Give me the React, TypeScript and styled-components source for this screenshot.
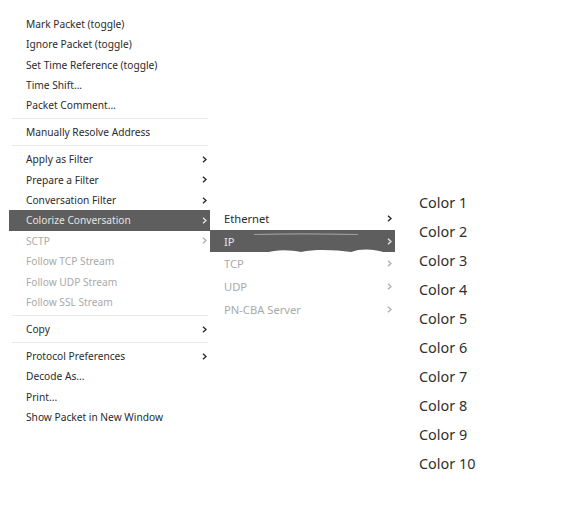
import React from "react";
import styled, { createGlobalStyle } from "styled-components";

const GlobalStyle = createGlobalStyle`
  html, body {
    margin: 0;
    padding: 0;
    background: #ffffff;
  }
  body {
    font-family: "Noto Sans", "DejaVu Sans", sans-serif;
    color: #2f2f2f;
  }
`;

type Entry =
  | { kind: "item"; label: string; sub?: boolean; disabled?: boolean; active?: boolean }
  | { kind: "sep" };

const mainItems: Entry[] = [
  { kind: "item", label: "Mark Packet (toggle)" },
  { kind: "item", label: "Ignore Packet (toggle)" },
  { kind: "item", label: "Set Time Reference (toggle)" },
  { kind: "item", label: "Time Shift..." },
  { kind: "item", label: "Packet Comment..." },
  { kind: "sep" },
  { kind: "item", label: "Manually Resolve Address" },
  { kind: "sep" },
  { kind: "item", label: "Apply as Filter", sub: true },
  { kind: "item", label: "Prepare a Filter", sub: true },
  { kind: "item", label: "Conversation Filter", sub: true },
  { kind: "item", label: "Colorize Conversation", sub: true, active: true },
  { kind: "item", label: "SCTP", sub: true, disabled: true },
  { kind: "item", label: "Follow TCP Stream", disabled: true },
  { kind: "item", label: "Follow UDP Stream", disabled: true },
  { kind: "item", label: "Follow SSL Stream", disabled: true },
  { kind: "sep" },
  { kind: "item", label: "Copy", sub: true },
  { kind: "sep" },
  { kind: "item", label: "Protocol Preferences", sub: true },
  { kind: "item", label: "Decode As..." },
  { kind: "item", label: "Print..." },
  { kind: "item", label: "Show Packet in New Window" },
];

const conversationItems = [
  { label: "Ethernet" },
  { label: "IP", active: true },
  { label: "TCP", disabled: true },
  { label: "UDP", disabled: true },
  { label: "PN-CBA Server", disabled: true },
];

const colors = Array.from({ length: 10 }, (_, i) => `Color ${i + 1}`);

const Page = styled.div`
  display: flex;
  align-items: flex-start;
  width: 566px;
  height: 513px;
  padding-left: 9px;
  box-sizing: border-box;
  overflow: hidden;
`;

const MainMenu = styled.div`
  display: flex;
  flex-direction: column;
  width: 201px;
  margin-top: 13.6px;
`;

const SubMenu = styled.div`
  display: flex;
  flex-direction: column;
  width: 185px;
  margin-top: 207px;
`;

const ColorMenu = styled.div`
  display: flex;
  flex-direction: column;
  margin-top: 187.8px;
  margin-left: 24px;
`;

const Row = styled.div<{ $active?: boolean; $disabled?: boolean; $h: number; $pad: number; $size: number }>`
  position: relative;
  display: flex;
  align-items: center;
  justify-content: space-between;
  height: ${(p) => p.$h}px;
  padding: 0 3px 0 ${(p) => p.$pad}px;
  font-size: ${(p) => p.$size}px;
  white-space: nowrap;
  background: ${(p) => (p.$active ? "#5e5e5e" : "transparent")};
  color: ${(p) => (p.$active ? "#e4e4e4" : p.$disabled ? "#a9a9a9" : "#2b2b2b")};
`;

const Separator = styled.div`
  height: 6.6px;
  display: flex;
  align-items: center;
  padding: 0 2px 0 3px;
  &::after {
    content: "";
    flex: 1;
    height: 1px;
    background: #e9e9e9;
  }
`;

const ColorItem = styled.div`
  height: 29px;
  display: flex;
  align-items: center;
  font-size: 14.4px;
  color: #303030;
`;

const Scribble = styled.svg`
  position: absolute;
  left: 36px;
  top: 0;
  pointer-events: none;
`;

const Chevron = ({ color }: { color: string }) => (
  <svg width="5" height="7" viewBox="0 0 5 7">
    <path d="M1 0.8 L4 3.5 L1 6.2" fill="none" stroke={color} strokeWidth="1.4" />
  </svg>
);

const arrowColor = (active?: boolean, disabled?: boolean) =>
  active ? "#e4e4e4" : disabled ? "#b0b0b0" : "#2a2a2a";

export default function App() {
  return (
    <>
      <GlobalStyle />
      <Page>
        <MainMenu>
          {mainItems.map((e, i) =>
            e.kind === "sep" ? (
              <Separator key={i} />
            ) : (
              <Row key={i} $h={20.4} $pad={17} $size={10.2} $active={e.active} $disabled={e.disabled}>
                <span>{e.label}</span>
                {e.sub && <Chevron color={arrowColor(e.active, e.disabled)} />}
              </Row>
            )
          )}
        </MainMenu>
        <SubMenu>
          {conversationItems.map((e) => (
            <Row key={e.label} $h={22.7} $pad={14} $size={11.2} $active={e.active} $disabled={e.disabled}>
              <span>{e.label}</span>
              <Chevron color={arrowColor(e.active, e.disabled)} />
              {e.active && (
                <Scribble width="150" height="23" viewBox="0 0 150 23">
                  <path d="M8 4.5 C40 3.5 90 4 112 4.5" stroke="#9a9a9a" strokeWidth="1.2" fill="none" />
                  <path
                    d="M20 23 C30 19 45 20 55 22 C70 19 90 20 105 22 C115 18 130 19 140 23 Z"
                    fill="#ffffff"
                  />
                </Scribble>
              )}
            </Row>
          ))}
        </SubMenu>
        <ColorMenu>
          {colors.map((c) => (
            <ColorItem key={c}>{c}</ColorItem>
          ))}
        </ColorMenu>
      </Page>
    </>
  );
}
